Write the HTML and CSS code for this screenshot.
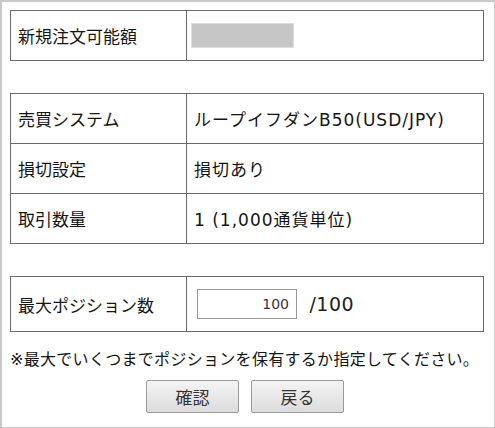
FILE: index.html
```html
<!DOCTYPE html>
<html lang="ja">
<head>
    <meta charset="UTF-8">
    <meta name="viewport" content="width=device-width, initial-scale=1.0">
    <title>注文設定</title>
    <link rel="stylesheet" href="styles.css">
</head>
<body>
    <div class="frame">
        <table class="info-table">
            <tr>
                <th>新規注文可能額</th>
                <td><span class="masked"></span></td>
            </tr>
        </table>

        <table class="info-table">
            <tr>
                <th>売買システム</th>
                <td>ループイフダンB50(USD/JPY)</td>
            </tr>
            <tr>
                <th>損切設定</th>
                <td>損切あり</td>
            </tr>
            <tr>
                <th>取引数量</th>
                <td>1 (1,000通貨単位)</td>
            </tr>
        </table>

        <table class="info-table position-table">
            <tr>
                <th>最大ポジション数</th>
                <td>
                    <input type="text" class="position-input" value="100">
                    <span class="position-max">/100</span>
                </td>
            </tr>
        </table>

        <p class="note">※最大でいくつまでポジションを保有するか指定してください。</p>

        <div class="buttons">
            <button type="button">確認</button>
            <button type="button">戻る</button>
        </div>
    </div>
</body>
</html>
```

FILE: styles.css
```css
* {
    box-sizing: border-box;
    margin: 0;
    padding: 0;
}

body {
    background: #fff;
    font-family: 'DejaVu Sans', 'Noto Sans CJK JP', sans-serif;
    color: #151515;
}

.frame {
    width: 495px;
    height: 428px;
    border: 1px solid #c8c8c8;
    border-left-width: 2px;
    border-top-width: 2px;
    padding: 8px 10px 0 8px;
}

.info-table {
    width: 474px;
    border-collapse: collapse;
    margin-bottom: 32px;
    border: 1px solid #6a6a6a;
}

.info-table th,
.info-table td {
    border: 1px solid #6a6a6a;
    height: 50px;
    padding: 0 7px;
    font-size: 17px;
    font-weight: normal;
    text-align: left;
    vertical-align: middle;
    white-space: nowrap;
}

.info-table th {
    width: 176px;
}

.info-table td {
    letter-spacing: 1px;
}

.masked {
    display: block;
    width: 103px;
    height: 25px;
    background: #c6c6c6;
    border: 1px solid #dcdcdc;
    margin-left: -3px;
}

.position-table {
    margin-bottom: 0;
}

.position-table th,
.position-table td {
    height: 55px;
}

.position-input {
    width: 100px;
    height: 30px;
    border: 1px solid #999;
    padding: 0 7px;
    margin-left: 3px;
    font-family: 'DejaVu Sans', sans-serif;
    font-size: 14px;
    color: #333;
    text-align: right;
    vertical-align: middle;
}

.position-max {
    margin-left: 6px;
    font-size: 19px;
    letter-spacing: 0.5px;
    color: #222;
    vertical-align: middle;
}

.note {
    font-size: 16px;
    line-height: 24px;
    margin-top: 16px;
    letter-spacing: 0.3px;
}

.buttons {
    display: flex;
    justify-content: center;
    gap: 12px;
    margin-top: 8px;
    padding-right: 4px;
}

.buttons button {
    width: 93px;
    height: 33px;
    border: 1px solid #9a9a9a;
    border-radius: 2px;
    background: linear-gradient(to bottom, #f4f4f4, #dcdcdc);
    font-family: 'Noto Sans CJK JP', sans-serif;
    font-size: 17px;
    color: #333;
}
```
